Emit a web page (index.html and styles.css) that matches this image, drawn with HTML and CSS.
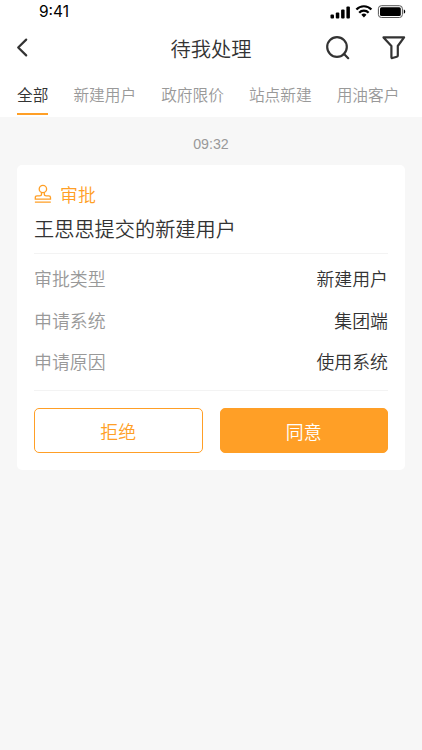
FILE: index.html
```html
<!DOCTYPE html>
<html lang="zh-CN">

<head>
    <meta charset="UTF-8">
    <meta name="viewport" content="width=device-width, initial-scale=1.0">
    <title>待我处理</title>
    <link rel="stylesheet" href="styles.css">
</head>

<body>
    <header class="header">
        <div class="status-bar">
            <span class="status-time">9:41</span>
            <svg class="status-icons" width="76" height="16" viewBox="0 0 76 16">
                <!-- signal -->
                <rect x="0.5" y="10.5" width="3.5" height="4" rx="1" />
                <rect x="5.8" y="8.5" width="3.5" height="6" rx="1" />
                <rect x="11.1" y="5.5" width="3.5" height="9" rx="1" />
                <rect x="16.4" y="2.5" width="3.5" height="12" rx="1" />
                <!-- wifi -->
                <g fill="none" stroke="#000" stroke-width="2.2">
                    <path d="M26.4 5.5a10.3 10.3 0 0 1 15 0" />
                    <path d="M29.2 8.7a6.3 6.3 0 0 1 9.4 0" />
                </g>
                <path d="M33.9 13.5l-2.6-2.7a3.7 3.7 0 0 1 5.2 0z" />
                <!-- battery -->
                <rect x="48.4" y="1.7" width="24" height="11.8" rx="3" fill="none" stroke="#555" />
                <rect x="50" y="3.2" width="20.8" height="8.8" rx="1.5" />
                <path d="M73.8 5.6c1.9.6 1.9 3.6 0 4.2z" />
            </svg>
        </div>
        <div class="nav-bar">
            <svg class="back-icon" width="14" height="20" viewBox="0 0 14 20">
                <path d="M11.2 1.6L3.2 9.5l8 7.9" />
            </svg>
            <h1 class="nav-title">待我处理</h1>
            <div class="nav-actions">
                <svg width="26" height="26" viewBox="0 0 26 26">
                    <circle cx="12" cy="12" r="9.8" />
                    <path d="M18.8 18.8l4.4 4.4" />
                </svg>
                <svg width="26" height="26" viewBox="0 0 26 26">
                    <path d="M2.5 2.4h20.6l-6.3 8.6v9.4q0 1-1 1.3l-4.4 1.3q-1 .2-1-1V11z" />
                </svg>
            </div>
        </div>
        <nav class="tabs">
            <span class="tab active">全部</span>
            <span class="tab">新建用户</span>
            <span class="tab">政府限价</span>
            <span class="tab">站点新建</span>
            <span class="tab">用油客户</span>
        </nav>
    </header>

    <main class="content">
        <div class="time">09:32</div>
        <section class="card">
            <div class="card-type">
                <svg width="18" height="20" viewBox="0 0 18 20">
                    <circle cx="8.9" cy="5" r="3.7" />
                    <path d="M7.5 8.6v1.6q0 1.6-2 1.6H3q-1.7 0-1.7 1.6v1.7h15.2v-1.7q0-1.6-1.7-1.6h-2.5q-2 0-2-1.6V8.6M.9 18.2h15.9" />
                </svg>
                <span>审批</span>
            </div>
            <h2 class="card-title">王思思提交的新建用户</h2>
            <div class="card-info">
                <div class="row">
                    <span class="label">审批类型</span>
                    <span>新建用户</span>
                </div>
                <div class="row">
                    <span class="label">申请系统</span>
                    <span>集团端</span>
                </div>
                <div class="row">
                    <span class="label">申请原因</span>
                    <span>使用系统</span>
                </div>
            </div>
            <div class="buttons">
                <button class="btn btn-reject">拒绝</button>
                <button class="btn btn-agree">同意</button>
            </div>
        </section>
    </main>
</body>

</html>
```

FILE: styles.css
```css
* {
    box-sizing: border-box;
}

body {
    margin: 0;
    min-height: 750px;
    background-color: #f7f7f7;
    color: #333;
    font-family: "Liberation Sans", "Noto Sans CJK SC", sans-serif;
    font-weight: 350;
}

h1,
h2 {
    margin: 0;
    font-weight: 350;
}

.header {
    height: 117px;
    background-color: #fff;
}

.status-bar {
    display: flex;
    justify-content: space-between;
    height: 24px;
    padding: 3px 16px 0 39px;
}

.status-time {
    color: #000;
    font-family: Inter, sans-serif;
    font-size: 15.5px;
    font-weight: 400;
    line-height: 18px;
}

.status-icons {
    margin-top: 1px;
}

.nav-bar {
    display: grid;
    grid-template-columns: 1fr auto 1fr;
    align-items: center;
    height: 48px;
    padding: 0 15px;
}

.nav-bar svg {
    fill: none;
    stroke: #333;
    stroke-width: 2.2;
    stroke-linecap: round;
    stroke-linejoin: round;
}

.nav-title {
    padding-top: 3px;
    font-size: 20.25px;
    line-height: 30px;
}

.nav-actions {
    display: flex;
    justify-content: flex-end;
    gap: 30px;
}

.tabs {
    display: flex;
    gap: 25px;
    height: 43px;
    padding-left: 17px;
}

.tab {
    flex: none;
    height: 43px;
    color: #999;
    font-size: 15.7px;
    line-height: 48px;
}

.tab.active {
    color: #333;
    border-bottom: 2px solid #ff9f26;
}

.content {
    padding: 17px;
}

.time {
    color: #999;
    font-size: 14.2px;
    line-height: 20px;
    text-align: center;
}

.card {
    height: 305px;
    margin-top: 11px;
    padding: 17px;
    background-color: #fff;
    border-radius: 5px;
}

.card-type {
    display: flex;
    align-items: center;
    gap: 8px;
    height: 24px;
    color: #ff9f26;
    font-size: 17.9px;
}

.card-type svg {
    fill: none;
    stroke: #ff9f26;
    stroke-width: 1.3;
}

.card-title {
    height: 48px;
    border-bottom: 1px solid #f3f3f3;
    font-size: 20.2px;
    line-height: 48px;
}

.card-info {
    height: 137px;
    padding-top: 6px;
    border-bottom: 1px solid #f3f3f3;
}

.row {
    display: flex;
    justify-content: space-between;
    font-size: 17.9px;
    line-height: 41.7px;
}

.label {
    color: #999;
}

.buttons {
    display: grid;
    grid-template-columns: 1fr 1fr;
    gap: 17px;
    margin-top: 17px;
}

.btn {
    height: 45px;
    padding: 0;
    border: 1px solid #ff9f26;
    border-radius: 5px;
    font-family: inherit;
    font-size: 17.9px;
    font-weight: 350;
}

.btn-reject {
    background-color: #fff;
    color: #ff9f26;
}

.btn-agree {
    background-color: #ff9f26;
    color: #fff;
}
```
